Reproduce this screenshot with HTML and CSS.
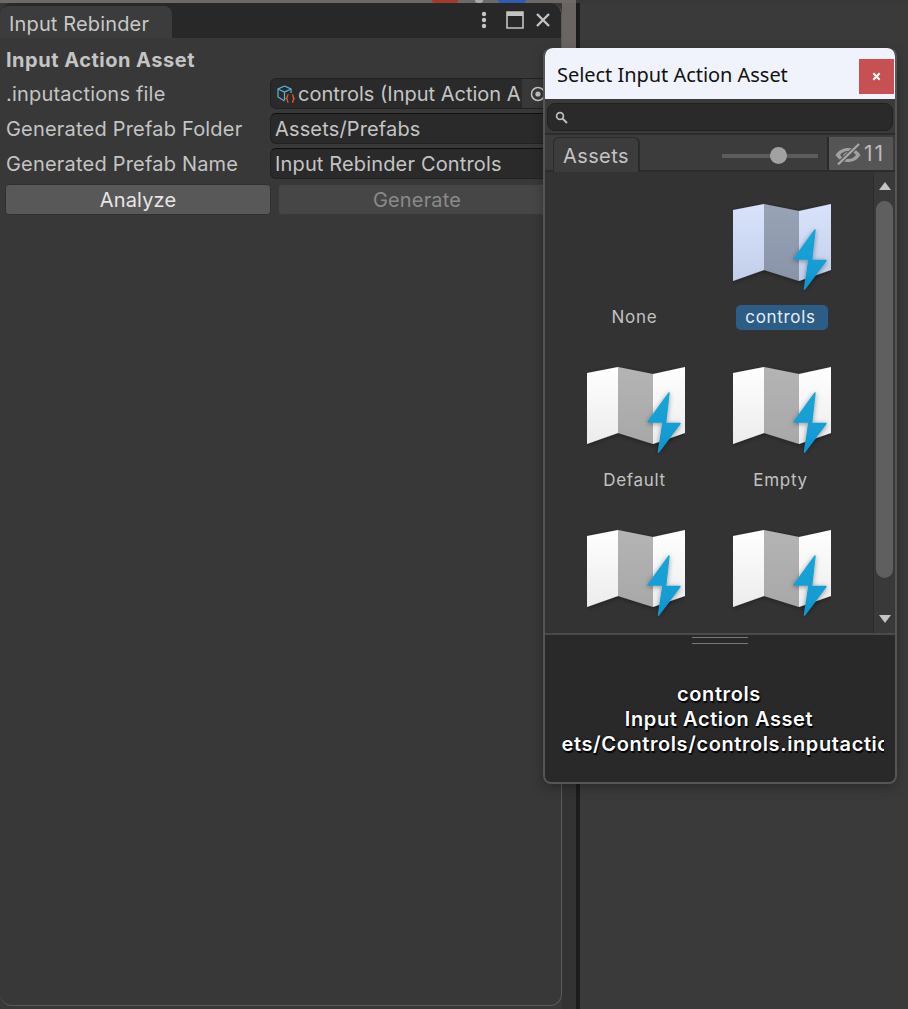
FILE: index.html
```html
<!DOCTYPE html>
<html lang="en">
<head>
<meta charset="utf-8">
<title>Input Rebinder</title>
<link rel="stylesheet" href="styles.css">
</head>
<body>
<svg class="defs" width="0" height="0" aria-hidden="true">
  <defs>
    <linearGradient id="bolt" x1="0" y1="0" x2="0" y2="1"><stop offset="0" stop-color="#1aa6d6"/><stop offset="1" stop-color="#0f96d2"/></linearGradient>
    <linearGradient id="page" x1="0" y1="0" x2="0" y2="1"><stop offset="0" stop-color="#ffffff"/><stop offset="1" stop-color="#ececec"/></linearGradient>
    <linearGradient id="fold" x1="0" y1="0" x2="0" y2="1"><stop offset="0" stop-color="#b4b4b4"/><stop offset="1" stop-color="#a8a8a8"/></linearGradient>
    <linearGradient id="pageSel" x1="0" y1="0" x2="0" y2="1"><stop offset="0" stop-color="#d8e3fb"/><stop offset="1" stop-color="#c3cfea"/></linearGradient>
    <linearGradient id="foldSel" x1="0" y1="0" x2="0" y2="1"><stop offset="0" stop-color="#99a3b6"/><stop offset="1" stop-color="#8a94a8"/></linearGradient>
    <filter id="soft" x="-20%" y="-20%" width="140%" height="140%"><feDropShadow dx="0" dy="1" stdDeviation="2.500" flood-color="#000" flood-opacity=".4"/></filter>
    <symbol id="map" viewBox="0 0 98 88">
      <g filter="url(#soft)">
        <path d="M0 6 31 0V66L0 77z" fill="url(#page)"/>
        <path d="M31 0 66 7V77L31 66z" fill="url(#fold)"/>
        <path d="M66 7 98 0V66L66 77z" fill="url(#page)"/>
      </g>
      <path filter="url(#soft)" d="M82 26 61 55H76L71.500 85 93 56.500H78.500z" fill="url(#bolt)" stroke="url(#bolt)" stroke-width="1.500" stroke-linejoin="round"/>
    </symbol>
    <symbol id="mapSel" viewBox="0 0 98 88">
      <g filter="url(#soft)">
        <path d="M0 6 31 0V66L0 77z" fill="url(#pageSel)"/>
        <path d="M31 0 66 7V77L31 66z" fill="url(#foldSel)"/>
        <path d="M66 7 98 0V66L66 77z" fill="url(#pageSel)"/>
      </g>
      <path filter="url(#soft)" d="M82 26 61 55H76L71.500 85 93 56.500H78.500z" fill="url(#bolt)" stroke="url(#bolt)" stroke-width="1.500" stroke-linejoin="round"/>
    </symbol>
  </defs>
</svg>

<div class="desk">
  <div class="top-strip">
    <span class="blob blob-red"></span>
    <span class="blob blob-grey"></span>
    <span class="blob blob-blue"></span>
  </div>
  <div class="panes">
    <main class="window">
      <header class="tabbar">
        <div class="tab">Input Rebinder</div>
        <div class="tab-tools">
          <svg class="tool-dots" width="6" height="18" viewBox="0 0 6 18"><circle cx="3" cy="3" r="2.200"/><circle cx="3" cy="9" r="2.200"/><circle cx="3" cy="15" r="2.200"/></svg>
          <svg class="tool-max" width="18" height="18" viewBox="0 0 18 18"><path d="M1 1H17V17H1z" fill="none" stroke="#c4c4c4" stroke-width="1.600"/><rect x="1" y="1" width="16" height="4" fill="#c4c4c4"/></svg>
          <svg class="tool-x" width="16" height="16" viewBox="0 0 16 16"><path d="M2 2 14 14M14 2 2 14" fill="none" stroke="#c4c4c4" stroke-width="2.400"/></svg>
        </div>
      </header>
      <section class="form">
        <h2 class="section-title">Input Action Asset</h2>
        <div class="row">
          <label class="label">.inputactions file</label>
          <div class="field field-object">
            <svg class="asset-icon" width="18" height="18" viewBox="0 0 18 18">
              <path d="M7.500 1 14 4V8M7.500 1 1 4V12L7.500 16M1 4 7.500 7 14 4M7.500 7V15" fill="none" stroke="#5bb4dc" stroke-width="1.200"/>
              <path d="M11.500 9.500C10 9.500 10.700 13 9.500 13.500 10.700 14 10 17.500 11.500 17.500M15 9.500C16.500 9.500 15.800 13 17 13.500 15.800 14 16.500 17.500 15 17.500" fill="none" stroke="#e2531f" stroke-width="1.500"/>
            </svg>
            <span class="field-text">controls (Input Action A</span>
            <span class="picker-target"><svg width="18" height="18" viewBox="0 0 18 18"><circle cx="9" cy="9" r="6.500" fill="none" stroke="#c4c4c4" stroke-width="1.500"/><circle cx="9" cy="9" r="2.600" fill="#c4c4c4"/></svg></span>
          </div>
        </div>
        <div class="row">
          <label class="label">Generated Prefab Folder</label>
          <div class="field field-text-input">Assets/Prefabs</div>
        </div>
        <div class="row">
          <label class="label">Generated Prefab Name</label>
          <div class="field field-text-input">Input Rebinder Controls</div>
        </div>
        <div class="buttons">
          <button class="btn">Analyze</button>
          <button class="btn btn-disabled">Generate</button>
        </div>
      </section>
    </main>
    <div class="gutter"></div>
    <div class="divider"></div>
    <div class="rest"></div>
  </div>
</div>

<aside class="picker">
  <header class="picker-title">
    <span>Select Input Action Asset</span>
    <span class="picker-close"><svg width="9" height="9" viewBox="0 0 9 9"><path d="M1.300 1.300 7.700 7.700M7.700 1.300 1.300 7.700" stroke="#fff" stroke-width="2" fill="none"/></svg></span>
  </header>
  <div class="picker-search-wrap">
    <div class="picker-search">
      <svg width="13" height="13" viewBox="0 0 13 13"><circle cx="5" cy="5" r="3.400" fill="none" stroke="#bdbdbd" stroke-width="1.700"/><path d="M7.500 7.500 12 12" stroke="#bdbdbd" stroke-width="2"/></svg>
    </div>
  </div>
  <div class="picker-tabs">
    <div class="picker-tab">Assets</div>
    <div class="picker-slider"><span class="slider-track"><span class="slider-thumb"></span></span></div>
    <div class="picker-hidden">
      <svg width="28" height="24" viewBox="0 0 28 24"><path d="M1.500 13C5 8 9 6 14 6S23 8 26.500 13C23 18 19 20 14 20S5 18 1.500 13z" fill="#a0a0a0"/><path d="M6 13C8.500 10 11 9 14 9S19.500 10 22 13C19.500 16 17 17 14 17S8.500 16 6 13z" fill="#555"/><path d="M9 13.500C10 11 12 10 15 10L10 15z" fill="#a0a0a0"/><path d="M4 22.500 25 2" stroke="#555" stroke-width="4.500"/><path d="M4 22.500 25 2" stroke="#a8a8a8" stroke-width="2.200"/></svg>
      <span class="hidden-count">11</span>
    </div>
  </div>
  <div class="picker-body">
    <div class="grid-area">
      <div class="asset-grid">
        <div class="asset asset-none"><div class="thumb"></div><div class="asset-name">None</div></div>
        <div class="asset"><svg class="thumb" viewBox="0 0 98 88"><use href="#mapSel"/></svg><div class="asset-name asset-selected">controls</div></div>
        <div class="asset"><svg class="thumb" viewBox="0 0 98 88"><use href="#map"/></svg><div class="asset-name">Default</div></div>
        <div class="asset"><svg class="thumb" viewBox="0 0 98 88"><use href="#map"/></svg><div class="asset-name">Empty</div></div>
        <div class="asset"><svg class="thumb" viewBox="0 0 98 88"><use href="#map"/></svg></div>
        <div class="asset"><svg class="thumb" viewBox="0 0 98 88"><use href="#map"/></svg></div>
      </div>
    </div>
    <div class="scrollbar">
      <svg class="arrow" width="12" height="8" viewBox="0 0 12 8"><path d="M6 0 12 8H0z" fill="#c4c4c4"/></svg>
      <div class="scroll-track"><div class="scroll-thumb"></div></div>
      <svg class="arrow" width="12" height="8" viewBox="0 0 12 8"><path d="M0 0H12L6 8z" fill="#c4c4c4"/></svg>
    </div>
  </div>
  <footer class="picker-info">
    <div class="grip"></div>
    <div class="info-text">
      <div class="info-line">controls</div>
      <div class="info-line">Input Action Asset</div>
      <div class="info-line info-path"><span>Assets/Controls/controls.inputactions</span></div>
    </div>
  </footer>
</aside>
</body>
</html>
```
FILE: styles.css
```css
* { box-sizing: border-box; }
html, body { margin: 0; padding: 0; }
body {
  width: 908px;
  height: 1009px;
  overflow: hidden;
  position: relative;
  background: #383838;
  font-family: Inter, "Noto Sans", sans-serif;
  font-size: 20px;
  letter-spacing: .15px;
  color: #c4c4c4;
}
.defs { position: absolute; }

.desk { height: 1009px; display: flex; flex-direction: column; }
.top-strip {
  height: 3px;
  flex: none;
  background: #6d6966;
  width: 576px;
  display: flex;
  padding-left: 432px;
}
.blob { display: block; height: 3px; border-radius: 0 0 8px 8px; }
.blob-red { width: 26px; background: #a53a28; }
.blob-grey { width: 8px; margin-left: 17px; background: #aaa; }
.blob-blue { width: 28px; margin-left: 15px; background: #2f5cb4; }

.panes { flex: 1; display: flex; min-height: 0; }
.window {
  width: 562px;
  flex: none;
  height: 1003px;
  display: flex;
  flex-direction: column;
  background: #383838;
  border: 1px solid #5a5a5a;
  border-top: 0;
  border-left: 0;
  border-radius: 12px;
  overflow: hidden;
}
.tabbar {
  height: 35px;
  flex: none;
  background: #282828;
  display: flex;
  justify-content: space-between;
  align-items: flex-end;
}
.tab {
  width: 172px;
  height: 32px;
  background: #3c3c3c;
  border-radius: 8px 8px 0 0;
  padding-left: 9px;
  line-height: 36px;
  color: #c8c8c8;
}
.tab-tools {
  display: flex;
  align-items: center;
  height: 35px;
  padding: 0 10px 2px 0;
}
.tool-dots { margin-right: 19px; }
.tool-max { margin-right: 11px; }
.tool-dots circle { fill: #c4c4c4; }

.form { padding: 5px 0 0 0; display: flex; flex-direction: column; }
.section-title {
  margin: 0;
  height: 33px;
  padding-left: 6px;
  font-size: 20px;
  font-weight: 700;
  letter-spacing: .5px;
  line-height: 34px;
  color: #c4c4c4;
}
.row { display: flex; height: 35px; align-items: center; }
.label { width: 270px; flex: none; padding: 1px 0 0 6px; letter-spacing: .2px; }
.field {
  flex: 1;
  height: 31px;
  background: #2a2a2a;
  border: 1px solid #212121;
  border-top-color: #0f0f0f;
  border-radius: 6px;
  display: flex;
  align-items: center;
  padding-left: 4px;
  white-space: nowrap;
  overflow: hidden;
}
.field-object { padding: 1px 0 0 6px; position: relative; border-top-color: #212121; }
.asset-icon { flex: none; margin-right: 3px; }
.field-text { flex: none; letter-spacing: 0; }
.picker-target {
  position: absolute;
  left: 251px;
  top: 0;
  bottom: 0;
  width: 30px;
  background: #383838;
  display: flex;
  align-items: center;
  padding-left: 7px;
}
.buttons { display: flex; gap: 7px; padding: 3px 5px 0 5px; }
.btn {
  width: 266px;
  height: 31px;
  flex: none;
  font: inherit;
  letter-spacing: inherit;
  color: #e6e6e6;
  background: #585858;
  border: 1px solid #303030;
  border-radius: 4px;
  padding: 0;
}
.btn-disabled {
  flex: 1;
  width: auto;
  color: #8a8a8a;
  background: #464646;
  border-color: #3a3a3a;
}

.gutter {
  width: 14px;
  flex: none;
  background: linear-gradient(#6a6563 0, #6a6563 46px, #333 120px, #333 100%);
}
.divider { width: 4px; flex: none; background: #1c1c1c; }
.rest { flex: 1; background: #3a3a3a; }

.picker {
  position: absolute;
  left: 543px;
  top: 48px;
  width: 354px;
  height: 736px;
  background: #383838;
  border: 2px solid #555;
  border-top: 0;
  border-radius: 8px;
  display: flex;
  flex-direction: column;
  overflow: hidden;
  box-shadow: 0 4px 12px rgba(0,0,0,.25);
}
.picker-title {
  height: 51px;
  flex: none;
  background: #f0f3fb;
  color: #111;
  font-family: "Noto Sans", sans-serif;
  font-size: 20px;
  letter-spacing: -.04px;
  display: flex;
  align-items: center;
  justify-content: space-between;
  padding: 1px 0 0 12px;
  border-radius: 8px 8px 0 0;
}
.picker-close {
  width: 35px;
  height: 35px;
  align-self: flex-start;
  margin: 10px 1px 0 0;
  background: #c75152;
  display: flex;
  align-items: center;
  justify-content: center;
}
.picker-search-wrap { height: 36px; flex: none; padding: 4px 2px 2px 2px; background: #3a3a3a; border-bottom: 2px solid #2c2c2c; }
.picker-search {
  height: 28px;
  background: #2a2a2a;
  border: 1px solid #212121;
  border-radius: 8px;
  display: flex;
  align-items: center;
  padding-left: 7px;
}
.picker-tabs {
  height: 37px;
  flex: none;
  display: flex;
  align-items: stretch;
  background: #3c3c3c;
  border-bottom: 2px solid #2c2c2c;
  padding: 2px 2px 0 8px;
}
.picker-tab {
  width: 87px;
  margin-bottom: -2px;
  background: #3c3c3c;
  border: 1px solid #2a2a2a;
  border-bottom: 0;
  border-right: 2px solid #2a2a2a;
  border-radius: 6px 6px 0 0;
  padding-left: 9px;
  line-height: 36px;
  letter-spacing: .4px;
  color: #c4c4c4;
}
.picker-slider { flex: 1; display: flex; align-items: center; padding: 4px 0 0 82px; }
.slider-track { display: block; width: 96px; height: 4px; background: #5c5c5c; position: relative; }
.slider-thumb {
  position: absolute;
  left: 48px;
  top: -7px;
  width: 17px;
  height: 17px;
  border-radius: 50%;
  background: #a2a2a2;
}
.picker-hidden {
  width: 66px;
  flex: none;
  background: #555;
  border-left: 2px solid #2a2a2a;
  display: flex;
  align-items: center;
  gap: 2px;
  padding-left: 5px;
  color: #bcbcbc;
}
.hidden-count { letter-spacing: 2px; font-size: 21px; }
.picker-body { height: 461px; flex: none; display: flex; background: #333; }
.grid-area { flex: 1; overflow: hidden; }
.asset-grid {
  display: grid;
  grid-template-columns: 146px 146px;
  grid-auto-rows: 163px;
  padding: 32px 0 0 18px;
}
.asset { width: 146px; display: flex; flex-direction: column; align-items: center; }
.thumb { width: 98px; height: 88px; flex: none; display: block; }
.asset-name {
  margin-top: 13px;
  height: 25px;
  padding: 0 12px 0 9px;
  font-size: 17px;
  letter-spacing: .7px;
  line-height: 25px;
  color: #c2c2c2;
}
.asset-selected { background: #2c5d87; border-radius: 5px; color: #e6eef5; }
.scrollbar {
  width: 22px;
  flex: none;
  border-left: 1px solid #2c2c2c;
  background: #393939;
  display: flex;
  flex-direction: column;
  align-items: center;
  padding: 10px 0;
  gap: 6px;
}
.arrow { flex: none; }
.scroll-track { flex: 1; width: 17px; padding-top: 5px; }
.scroll-thumb { width: 17px; height: 377px; border-radius: 9px; background: #5f5f5f; }
.picker-info {
  flex: 1;
  background: #292929;
  border-top: 2px solid #4a4a4a;
  display: flex;
  flex-direction: column;
  align-items: center;
  border-radius: 0 0 6px 6px;
}
.grip { width: 56px; height: 7px; margin-top: 2px; border-top: 1px solid #777; border-bottom: 1px solid #777; flex: none; }
.info-text { width: 322px; margin: 38px 0 0 -2px; text-align: center; }
.info-line {
  height: 25px;
  line-height: 25px;
  font-weight: 600;
  letter-spacing: .6px;
  color: #fff;
  text-shadow: 1px 2px 1px #000, 0 0 2px #000;
}
.info-path {
  display: flex;
  justify-content: center;
  margin: 0 -4px 0 4px;
  overflow: hidden;
  white-space: nowrap;
}
.info-path span { flex: none; margin-right: 8px; }
```
